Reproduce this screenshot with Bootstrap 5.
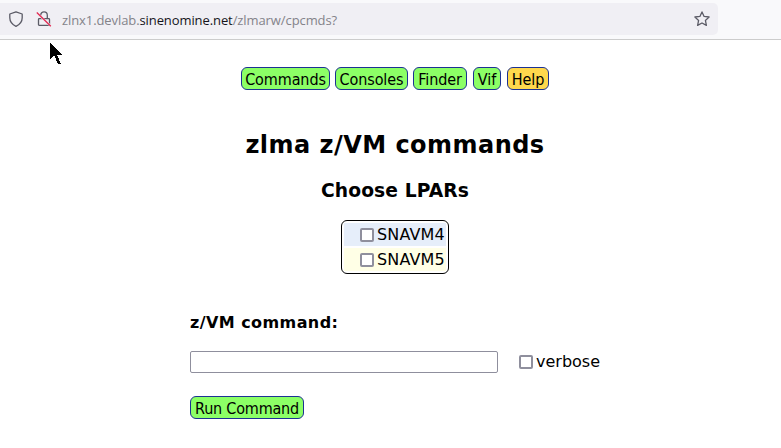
<!DOCTYPE html>
<html lang="en">
<head>
<meta charset="utf-8">
<meta name="viewport" content="width=device-width, initial-scale=1">
<title>zlma z/VM commands</title>
<link href="https://cdn.jsdelivr.net/npm/bootstrap@5.3.0/dist/css/bootstrap.min.css" rel="stylesheet">
<style>
body{font:16px/20px "DejaVu Sans",sans-serif;color:#000;height:448px;overflow:hidden}
.browser-bar{height:40px;background:#f9f9fb;border-bottom:1px solid #ccc;padding-top:3px}
.address{width:718px;height:32px;background:#f0eff4;border-radius:0 5px 5px 0;padding:0 8px}
.lock-icon{margin-left:12px}
.url-text{font:13px/32px "Open Sans",sans-serif;letter-spacing:-.09px;color:#84838a;margin-left:10px;padding-top:1px;white-space:pre}
.url-text b{font-weight:400;color:#15141a}
.pointer{position:absolute;left:50px;top:42px}
.page-body{width:410px;margin-left:190px;padding-top:27px}
.pill{display:block;height:23px;border:1px solid #1c3193;border-radius:6px;background:#8cff66;color:#000;padding:0;text-align:center;font:16px/23px "DejaVu Sans Condensed","DejaVu Sans",sans-serif;font-stretch:condensed;letter-spacing:-.1px;text-decoration:none;white-space:nowrap}
.pill-help{background:#ffd84d}
.w-commands{width:89px}.w-consoles{width:73px}.w-finder{width:54px;margin-right:1px}.w-vif{width:28px;margin-right:1px}.w-help{width:42px}
.nav-pills-row{gap:5px}
.title{font-size:24px;line-height:30px;font-weight:700;letter-spacing:.47px;margin:40px 0 0;white-space:nowrap}
.subtitle{font-size:18.7px;line-height:24px;font-weight:700;letter-spacing:.1px;margin:19px 0 0}
.lpars{width:108px;height:54px;border:1px solid #000;border-radius:6px;padding:2px;margin:17px auto 0;gap:2px}
.lpar{height:23px;padding-left:16px;line-height:23px;letter-spacing:.15px}
.lpar-a{background:#e6eefa}.lpar-b{background:#ffffe6}
.tick{appearance:none;width:14px;height:14px;border:2px solid #8f8f9d;border-radius:2px;background:#fff;margin:0 3px 0 0;flex:none}
.cmd-label{font-weight:700;letter-spacing:.42px;margin-top:39px}
.cmd-row{margin-top:18px;height:22px}
.cmd-input{width:308px;height:22px;border:1px solid #8f8f9d;border-radius:2px;padding:0 4px;margin-right:21px}
.w-run{width:114px;margin-top:23px;letter-spacing:-.2px}
</style>
<script src="https://cdn.jsdelivr.net/npm/bootstrap@5.3.0/dist/js/bootstrap.bundle.min.js"></script>
</head>
<body class="bg-white">
<header class="browser-bar">
  <div class="address d-flex align-items-center">
    <svg width="16" height="16" viewBox="0 0 16 16" fill="none" stroke="#5b5b66" stroke-width="1.3" stroke-linejoin="round"><path d="M8 .8 14.2 3v3.8c0 3.8-2.5 6.8-6.2 8.500C4.300 13.600 1.800 10.600 1.800 6.800V3z"/></svg>
    <svg class="lock-icon" width="16" height="16" viewBox="0 0 16 16" fill="none" stroke-width="1.3"><path d="M3.300 7.700h9.400q.8 0 .8.800v5q0 .8-.8.800H3.300q-.8 0-.8-.8v-5q0-.8.8-.8M4.700 4.500v-.2C4.700 2.300 6.200.8 8 .8s3.300 1.500 3.300 3.500v3.400" stroke="#5b5b66"/><path d="m1 2 14 13.300" stroke="#f0eff4" stroke-width="2"/><path d="m.8 1.500 14 13.700" stroke="#e22850"/></svg>
    <div class="url-text flex-grow-1"><span>zlnx1.devlab.</span><b>sinenomine.net</b><span>/zlmarw/cpcmds?</span></div>
    <svg width="16" height="16" viewBox="0 0 16 16" fill="none" stroke="#5b5b66" stroke-width="1.3" stroke-linejoin="round"><path d="m8 .9 2.100 4.500 5 .6-3.700 3.400 1 5L8 12l-4.400 2.400 1-5L.9 6l5-.6z"/></svg>
  </div>
</header>
<svg class="pointer" width="13" height="23" viewBox="0 0 13 23" shape-rendering="crispEdges"><path d="M0 0v17l4-4 4 9h3l-4-9h5z"/></svg>
<main class="page-body">
  <nav class="d-flex justify-content-center nav-pills-row">
    <a class="pill w-commands" href="#">Commands</a>
    <a class="pill w-consoles" href="#">Consoles</a>
    <a class="pill w-finder" href="#">Finder</a>
    <a class="pill w-vif" href="#">Vif</a>
    <a class="pill pill-help w-help" href="#">Help</a>
  </nav>
  <h1 class="title text-center">zlma z/VM commands</h1>
  <h2 class="subtitle text-center">Choose LPARs</h2>
  <form>
    <div class="lpars d-flex flex-column">
      <label class="lpar lpar-a d-flex align-items-center"><input class="tick" type="checkbox">SNAVM4</label>
      <label class="lpar lpar-b d-flex align-items-center"><input class="tick" type="checkbox">SNAVM5</label>
    </div>
    <div class="cmd-label">z/VM command:</div>
    <div class="cmd-row d-flex align-items-center">
      <input class="cmd-input" type="text" aria-label="z/VM command">
      <label class="d-flex align-items-center"><input class="tick" type="checkbox">verbose</label>
    </div>
    <button class="pill w-run" type="button">Run Command</button>
  </form>
</main>
</body>
</html>
